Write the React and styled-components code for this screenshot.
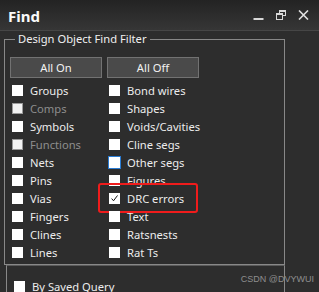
import React from 'react';
import styled, { createGlobalStyle } from 'styled-components';

const GlobalStyle = createGlobalStyle`
  html, body {
    margin: 0;
    padding: 0;
    background: #2d2d2d;
    overflow: hidden;
  }
  body {
    font-family: "Noto Sans", "Open Sans", sans-serif;
    color: #ececec;
  }
`;

const Window = styled.div`
  position: relative;
  width: 319px;
  height: 292px;
  background: #2d2d2d;
  overflow: hidden;
`;

const TitleBar = styled.div`
  height: 30px;
  display: flex;
  align-items: center;
  padding: 0 10px 0 8px;
  background: linear-gradient(#232323, #363636);
  border-bottom: 1px solid #464646;
`;

const Title = styled.div`
  flex: 1;
  font-size: 15px;
  font-weight: 700;
  color: #fafafa;
  padding-top: 1px;
`;

const WinButtons = styled.div`
  display: flex;
  align-items: center;
  gap: 12px;
`;

const Fieldset = styled.fieldset`
  margin: 0 0 0 4px;
  width: 281px;
  box-sizing: border-box;
  border: 1px solid #888;
  padding: 10px 5px 3px 5px;
`;

const Legend = styled.legend`
  font-size: 11.2px;
  color: #f0f0f0;
  padding: 0 3px;
  margin-left: 5px;
  line-height: 16px;
`;

const ButtonRow = styled.div`
  display: flex;
  gap: 5px;
`;

const Button = styled.button`
  width: 92px;
  height: 21px;
  background: #4a4a4a;
  border: 1px solid #727272;
  color: #f2f2f2;
  font-family: inherit;
  font-size: 11.2px;
  padding: 0;
`;

const Grid = styled.div`
  display: grid;
  grid-template-columns: 97px 97px;
  grid-auto-rows: 18px;
  margin-top: 3px;
  padding-left: 2px;
`;

const Item = styled.label`
  position: relative;
  display: flex;
  align-items: center;
  gap: 7px;
  font-size: 11.2px;
  color: ${(p) => (p.disabled ? '#8e8e8e' : '#ececec')};
  white-space: nowrap;
`;

const Box = styled.span`
  box-sizing: border-box;
  flex: none;
  display: flex;
  align-items: center;
  justify-content: center;
  background: ${(p) => (p.disabled ? '#f2f2f2' : '#ffffff')};
  border: ${(p) =>
    p.focused ? '1.5px solid #2a7cd3' : p.disabled ? '1px solid #9a9a9a' : '1px solid #ffffff'};
  width: ${(p) => (p.focused ? '13px' : '11px')};
  height: ${(p) => (p.focused ? '13px' : '11px')};
  margin-left: ${(p) => (p.focused ? '-1px' : '0')};
  margin-right: ${(p) => (p.focused ? '-1px' : '0')};
`;

const Highlight = styled.div`
  position: absolute;
  left: -11px;
  top: -6px;
  width: 100px;
  height: 30px;
  box-sizing: border-box;
  border: 2px solid #f01c1c;
  border-radius: 3px;
  pointer-events: none;
`;

const Lower = styled.div`
  margin-left: 6px;
  width: 279px;
  box-sizing: border-box;
  height: 40px;
  border-left: 1px solid #888;
  border-right: 1px solid #888;
  border-top: 1px solid #5a5a5a;
  padding: 13px 0 0 7px;
`;

const Watermark = styled.div`
  position: absolute;
  right: 5px;
  bottom: 8px;
  font-family: "Liberation Sans", Arial, sans-serif;
  font-size: 9px;
  color: #8d8d8d;
`;

const left = [
  ['Groups'],
  ['Comps', 'disabled'],
  ['Symbols'],
  ['Functions', 'disabled'],
  ['Nets'],
  ['Pins'],
  ['Vias'],
  ['Fingers'],
  ['Clines'],
  ['Lines']
];

const right = [
  ['Bond wires'],
  ['Shapes'],
  ['Voids/Cavities'],
  ['Cline segs'],
  ['Other segs', 'focused'],
  ['Figures'],
  ['DRC errors', 'checked'],
  ['Text'],
  ['Ratsnests'],
  ['Rat Ts']
];

function Check({ label, state }) {
  return (
    <Item disabled={state === 'disabled'}>
      <Box disabled={state === 'disabled'} focused={state === 'focused'}>
        {state === 'checked' && (
          <svg width='11' height='11' viewBox='0 0 11 11'>
            <path d='M2 5.6 L4.3 8.3 L9.2 1.8' fill='none' stroke='#111' strokeWidth='1.2' />
          </svg>
        )}
      </Box>
      {label}
      {state === 'checked' && <Highlight />}
    </Item>
  );
}

export default function App() {
  const rows = [];
  left.forEach((l, i) => {
    rows.push(<Check key={'l' + i} label={l[0]} state={l[1]} />);
    rows.push(<Check key={'r' + i} label={right[i][0]} state={right[i][1]} />);
  });

  return (
    <Window>
      <GlobalStyle />
      <TitleBar>
        <Title>Find</Title>
        <WinButtons>
          <svg width='11' height='11' viewBox='0 0 11 11'>
            <rect x='0.5' y='8' width='10' height='2' fill='#d8d8d8' />
          </svg>
          <svg width='10' height='10' viewBox='0 0 10 10'>
            <rect x='3.5' y='0.5' width='6' height='5' fill='none' stroke='#d8d8d8' />
            <rect x='3.5' y='0.5' width='6' height='1.5' fill='#d8d8d8' />
            <rect x='0.5' y='3.5' width='6' height='6' fill='#2f2f2f' stroke='#d8d8d8' />
            <rect x='0.5' y='3.5' width='6' height='1.5' fill='#d8d8d8' />
          </svg>
          <svg width='11' height='10' viewBox='0 0 11 10'>
            <path d='M1 0.5 L10 9.5 M10 0.5 L1 9.5' stroke='#e0e0e0' strokeWidth='1.6' />
          </svg>
        </WinButtons>
      </TitleBar>
      <Fieldset>
        <Legend>Design Object Find Filter</Legend>
        <ButtonRow>
          <Button>All On</Button>
          <Button>All Off</Button>
        </ButtonRow>
        <Grid>{rows}</Grid>
      </Fieldset>
      <Lower>
        <Check label='By Saved Query' />
      </Lower>
      <Watermark>CSDN @DVYWUI</Watermark>
    </Window>
  );
}
